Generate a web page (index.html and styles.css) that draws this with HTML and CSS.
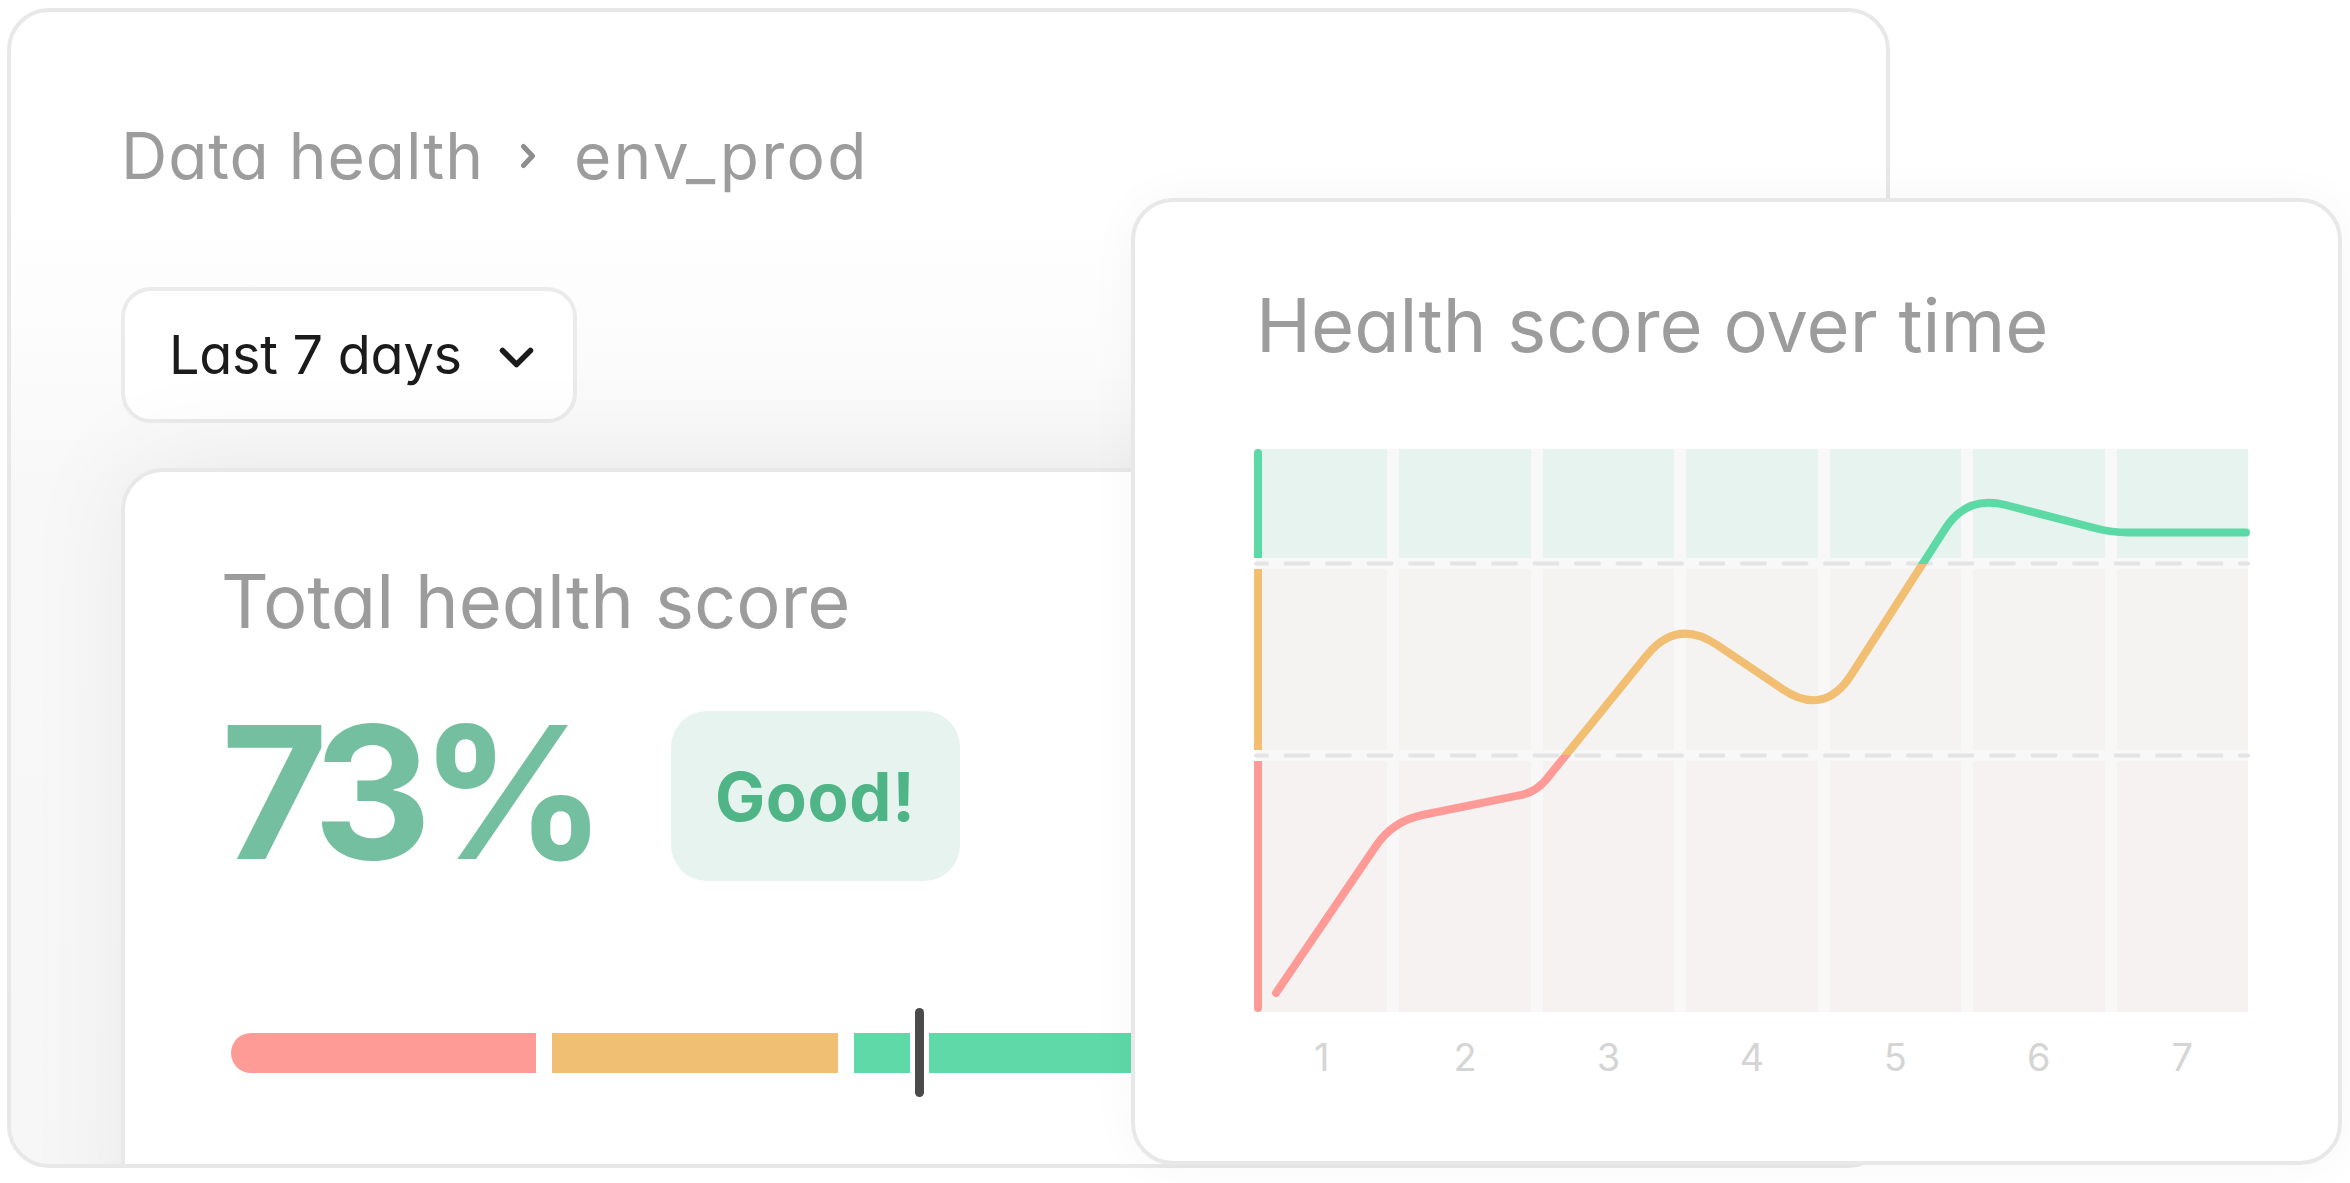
FILE: index.html
```html
<!DOCTYPE html>
<html lang="en">
<head>
<meta charset="utf-8">
<title>Data health</title>
<link rel="stylesheet" href="styles.css">
</head>
<body>
<div class="stage">
  <section class="panel">
    <nav class="crumbs">
      <span class="crumb">Data health</span>
      <svg class="crumb-sep" viewBox="0 0 16 26" width="16" height="26"><path d="M3.5 3.5 L12.5 13 L3.5 22.5" fill="none" stroke="#8e8e8e" stroke-width="5" stroke-linecap="round" stroke-linejoin="round"/></svg>
      <span class="crumb crumb-env">env_prod</span>
    </nav>
    <div class="range">
      <span class="range-label">Last 7 days</span>
      <svg class="caret" viewBox="0 0 35 21" width="35" height="21"><path d="M3.5 3.5 L17.5 17.5 L31.5 3.5" fill="none" stroke="#1b1b1b" stroke-width="5.5" stroke-linecap="round" stroke-linejoin="round"/></svg>
    </div>
    <article class="score-card">
      <h2 class="score-title">Total health score</h2>
      <div class="score-row">
        <span class="score-value">73%</span>
        <span class="badge">Good!</span>
      </div>
      <div class="meter">
        <span class="seg seg-red"></span>
        <span class="seg seg-orange"></span>
        <span class="seg seg-green"></span>
        <span class="marker"></span>
      </div>
    </article>
  </section>

  <section class="chart-card">
    <h2 class="chart-title">Health score over time</h2>
    <div class="chart">
      <div class="bands">
        <span class="cell good"></span><span class="cell good"></span><span class="cell good"></span><span class="cell good"></span><span class="cell good"></span><span class="cell good"></span><span class="cell good"></span>
        <span class="cell fair"></span><span class="cell fair"></span><span class="cell fair"></span><span class="cell fair"></span><span class="cell fair"></span><span class="cell fair"></span><span class="cell fair"></span>
        <span class="cell poor"></span><span class="cell poor"></span><span class="cell poor"></span><span class="cell poor"></span><span class="cell poor"></span><span class="cell poor"></span><span class="cell poor"></span>
      </div>
      <svg class="plot" viewBox="0 0 992 563" width="992" height="563">
        <defs>
          <linearGradient id="lineGrad" gradientUnits="userSpaceOnUse" x1="0" y1="0" x2="0" y2="563">
            <stop offset="0" stop-color="#5dd9a6"/>
            <stop offset="0.2034" stop-color="#5dd9a6"/>
            <stop offset="0.2034" stop-color="#f1be72"/>
            <stop offset="0.5444" stop-color="#f1be72"/>
            <stop offset="0.5444" stop-color="#ff9a96"/>
            <stop offset="1" stop-color="#ff9a96"/>
          </linearGradient>
        </defs>
        <line x1="0" y1="114.5" x2="992" y2="114.5" class="dash"/>
        <line x1="0" y1="306.5" x2="992" y2="306.5" class="dash"/>
        <path d="M-2 4 A4 4 0 0 1 6 4 L6 109 L-2 109 Z" fill="#5dd9a6"/>
        <rect x="-2" y="120" width="8" height="181" fill="#f1be72"/>
        <path d="M-2 312 L6 312 L6 559 A4 4 0 0 1 -2 559 Z" fill="#ff9a96"/>
        <path d="M20 544 L120.1 396.8 Q137 372 166.4 366 L264.3 346.2 Q280 343 290.1 330.6 L390.8 206.3 Q421 169 460.8 195.8 L526.5 240.1 Q568 268 595.1 226 L689.3 79.6 Q711 46 749.7 56 L840.5 79.5 Q856 83.5 872 83.5 L990 83.5" fill="none" stroke="url(#lineGrad)" stroke-width="8" stroke-linecap="round" stroke-linejoin="round"/>
      </svg>
    </div>
    <div class="x-labels">
      <span>1</span><span>2</span><span>3</span><span>4</span><span>5</span><span>6</span><span>7</span>
    </div>
  </section>
</div>
</body>
</html>
```

FILE: styles.css
```css
* {
  box-sizing: border-box;
}

html, body {
  margin: 0;
  padding: 0;
  background: #ffffff;
}

body {
  font-family: "Inter", "Noto Sans", sans-serif;
  font-feature-settings: "cv11" 1;
  width: 2350px;
  height: 1183px;
  overflow: hidden;
}

.stage {
  position: relative;
  width: 2350px;
  height: 1183px;
  padding: 8px 0 0 7px;
}

/* ---------- main panel ---------- */
.panel {
  width: 1883px;
  height: 1160px;
  border: 4px solid #e8e8e8;
  border-radius: 42px;
  overflow: hidden;
  padding: 112px 0 0 110px;
  background: linear-gradient(180deg, #ffffff 0px, #ffffff 200px, #f8f8f8 470px, #f7f7f7 100%);
}

.crumbs {
  display: flex;
  align-items: center;
  height: 63px;
  font-size: 64px;
  line-height: 63px;
  color: #9c9c9c;
  letter-spacing: 0.015em;
}

.crumb-env {
  letter-spacing: 0.036em;
}

.crumb-sep {
  margin: 0 38px 0 36px;
}

.range {
  margin-top: 100px;
  width: 456px;
  height: 136px;
  border: 4px solid #ebebeb;
  border-radius: 30px;
  background: #ffffff;
  display: flex;
  align-items: center;
  padding-left: 44px;
  gap: 37px;
}

.range-label {
  font-size: 54px;
  line-height: 54px;
  color: #1b1b1b;
  letter-spacing: -0.005em;
}

.caret {
  margin-top: 4px;
}

/* ---------- score card ---------- */
.score-card {
  margin-top: 45px;
  width: 1620px;
  height: 820px;
  border: 4px solid #e8e8e8;
  border-radius: 42px;
  background: #ffffff;
  padding: 92px 0 0 96px;
  box-shadow: 0 -10px 110px rgba(0, 0, 0, 0.06);
}

.score-title {
  margin: 0;
  font-weight: 400;
  font-size: 74px;
  line-height: 74px;
  color: #9c9c9c;
  letter-spacing: 0;
}

.score-row {
  margin-top: 62px;
  display: flex;
  align-items: center;
  gap: 76px;
}

.score-value {
  font-weight: 700;
  font-size: 184px;
  line-height: 184px;
  color: #74bfa0;
  letter-spacing: -0.065em;
}

.badge {
  margin-top: 8px;
  width: 289px;
  height: 170px;
  border-radius: 36px;
  background: #e6f3ee;
  display: flex;
  align-items: center;
  justify-content: center;
  font-weight: 700;
  font-size: 67px;
  color: #4fb486;
  letter-spacing: 0.01em;
}

.meter {
  position: relative;
  margin: 149px 0 0 10px;
  display: flex;
  gap: 16px;
  height: 40px;
}

.seg {
  display: block;
  height: 40px;
}

.seg-red {
  width: 305px;
  background: #ff9b97;
  border-radius: 20px 0 0 20px;
}

.seg-orange {
  width: 286px;
  background: #f1bf74;
}

.seg-green {
  width: 600px;
  background: #5ed9a7;
}

.marker {
  position: absolute;
  left: 684px;
  top: -25px;
  width: 9px;
  height: 89px;
  border-radius: 5px;
  background: #4a4a4a;
  box-shadow: 0 0 0 5px #ffffff;
}

/* ---------- chart card ---------- */
.chart-card {
  position: absolute;
  left: 1131px;
  top: 198px;
  width: 1211px;
  height: 967px;
  border: 4px solid #e8e8e8;
  border-radius: 42px;
  background: #ffffff;
  padding: 86px 0 0 121px;
  box-shadow: 0 0 50px rgba(0, 0, 0, 0.035);
}

.chart-title {
  margin: 0;
  font-weight: 400;
  font-size: 74px;
  line-height: 74px;
  color: #9c9c9c;
  letter-spacing: 0;
}

.chart {
  position: relative;
  margin-top: 87px;
  width: 992px;
  height: 563px;
}

.bands {
  display: grid;
  grid-template-columns: repeat(7, 1fr);
  grid-template-rows: 109px 181px 251px;
  column-gap: 12px;
  row-gap: 11px;
  width: 992px;
  height: 563px;
  background: #f8f8f8;
}

.cell.good { background: #e7f3ee; }
.cell.fair { background: #f4f3f1; }
.cell.poor { background: #f6f2f2; }

.plot {
  position: absolute;
  left: 0;
  top: 0;
  overflow: visible;
}

.dash {
  stroke: #e4e4e4;
  stroke-width: 4;
  stroke-linecap: round;
  stroke-dasharray: 23 18.5;
  stroke-dashoffset: 12;
}

.x-labels {
  margin-top: 26px;
  width: 992px;
  display: grid;
  grid-template-columns: repeat(7, 1fr);
  column-gap: 12px;
  font-size: 38px;
  line-height: 38px;
  color: #d5d5d5;
  text-align: center;
}
```
